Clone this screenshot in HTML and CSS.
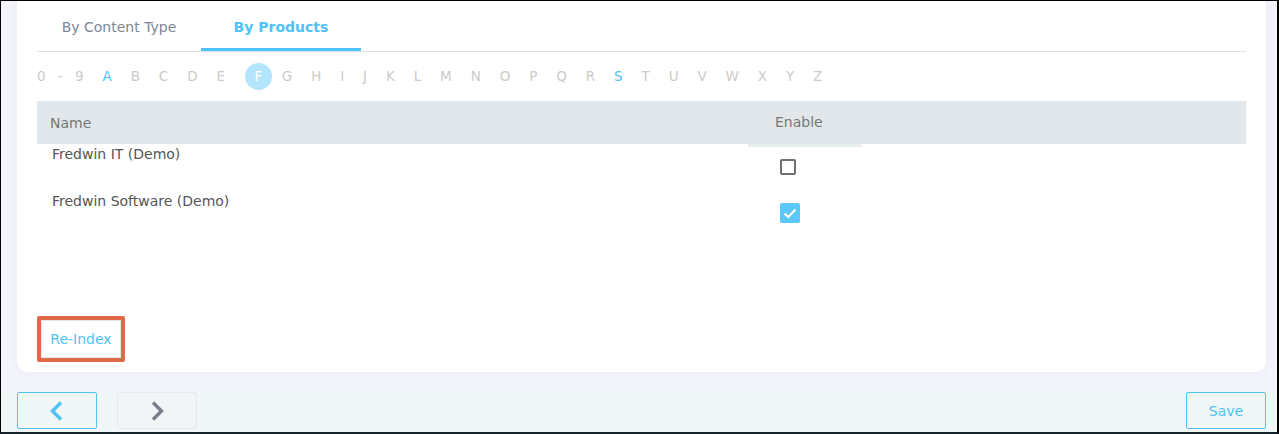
FILE: index.html
```html
<!DOCTYPE html>
<html>
<head>
<meta charset="utf-8">
<link rel="stylesheet" href="styles.css">
</head>
<body>
<div class="frame">
  <div class="card">
    <div class="tabs">
      <div class="tab">By Content Type</div>
      <div class="tab active">By Products</div>
    </div>
    <div class="alpha">
      <span class="ch num">0 - 9</span>
      <span class="ch on">A</span>
      <span class="ch">B</span>
      <span class="ch">C</span>
      <span class="ch">D</span>
      <span class="ch">E</span>
      <span class="ch sel">F</span>
      <span class="ch">G</span>
      <span class="ch">H</span>
      <span class="ch">I</span>
      <span class="ch">J</span>
      <span class="ch">K</span>
      <span class="ch">L</span>
      <span class="ch">M</span>
      <span class="ch">N</span>
      <span class="ch">O</span>
      <span class="ch">P</span>
      <span class="ch">Q</span>
      <span class="ch">R</span>
      <span class="ch on">S</span>
      <span class="ch">T</span>
      <span class="ch">U</span>
      <span class="ch">V</span>
      <span class="ch">W</span>
      <span class="ch">X</span>
      <span class="ch">Y</span>
      <span class="ch">Z</span>
    </div>
    <div class="table">
      <div class="thead">
        <div class="th name">Name</div>
        <div class="th enable">Enable</div>
      </div>
      <div class="row">
        <div class="td name">Fredwin IT (Demo)</div>
        <div class="td enable"><span class="cb"></span></div>
      </div>
      <div class="row">
        <div class="td name">Fredwin Software (Demo)</div>
        <div class="td enable"><span class="cb checked"><svg viewBox="0 0 20 20" width="20" height="20"><path d="M4.5 10.5 L8.2 14 L15.5 6.5" fill="none" stroke="#fff" stroke-width="2.2"/></svg></span></div>
      </div>
    </div>
    <div class="actions">
      <div class="reindex-wrap"><button class="reindex">Re-Index</button></div>
    </div>
  </div>
  <div class="footer">
    <button class="nav prev"><svg viewBox="0 0 20 20" width="20" height="20"><path d="M14 1.5 L5.5 10 L14 18.5" fill="none" stroke="#4fc3f7" stroke-width="3.4"/></svg></button>
    <button class="nav next"><svg viewBox="0 0 20 20" width="20" height="20"><path d="M6 1.5 L14.5 10 L6 18.5" fill="none" stroke="#7b7d8c" stroke-width="3.4"/></svg></button>
    <div class="spacer"></div>
    <button class="save">Save</button>
  </div>
</div>
</body>
</html>
```

FILE: styles.css
```css
* { box-sizing: border-box; }
html, body { margin: 0; padding: 0; }
body {
  font-family: "DejaVu Sans", "Noto Sans", sans-serif;
  background: #f3f4fc;
}
.frame {
  width: 1279px;
  height: 434px;
  border-top: 1px solid #000;
  border-left: 1px solid #000;
  border-right: 2px solid #000;
  border-bottom: 2px solid #16232a;
  background: #f3f4fc;
  display: flex;
  flex-direction: column;
  overflow: hidden;
}
.card {
  margin: 0 11px 0 16px;
  height: 371px;
  background: #fff;
  border-radius: 0 0 10px 10px;
  padding: 0 20px;
  box-shadow: 0 0 8px rgba(225, 225, 240, 0.6);
  display: flex;
  flex-direction: column;
}
.tabs {
  display: flex;
  height: 51px;
  border-bottom: 1px solid #e1e1e1;
}
.tab {
  height: 50px;
  display: flex;
  align-items: center;
  justify-content: center;
  font-size: 14px;
  color: #7d8694;
  padding-top: 1px;
}
.tab:first-child { width: 164px; }
.tab.active {
  width: 160px;
  color: #4fc3f7;
  font-weight: bold;
  border-bottom: 3px solid #4fc3f7;
  padding-top: 4px;
}
.alpha {
  height: 49px;
  display: flex;
  align-items: center;
  gap: 18.9px;
  font-size: 13.5px;
  color: #cbcbcb;
}
.ch { line-height: 27px; }
.ch.num { word-spacing: 8px; }
.ch.on { color: #4fc3f7; }
.ch.sel {
  width: 27px;
  height: 27px;
  border-radius: 50%;
  background: #b3e5fc;
  color: #fff;
  text-align: center;
  margin-left: 1px;
  margin-right: -9px;
}
.table { display: flex; flex-direction: column; }
.thead {
  display: flex;
  height: 43px;
  background: #e1e7ea;
  align-items: center;
  font-size: 14px;
  color: #777;
}
.name { width: 711px; padding-left: 13px; }
.th.enable {
  width: 114px;
  padding-left: 27px;
  height: 43px;
  line-height: 43px;
  box-shadow: 0 3px 0 #e8eef0;
}
.row { display: flex; height: 47px; font-size: 14px; color: #555; }
.td.name { padding-left: 15px; padding-top: 2px; }
.td.enable { padding-left: 32px; }
.cb {
  display: block;
  width: 16px;
  height: 16px;
  border: 2px solid #6f6f6f;
  border-radius: 2px;
  margin-top: 15px;
}
.cb.checked {
  width: 20px;
  height: 20px;
  border: none;
  background: #5ac8fa;
  margin-top: 12px;
}
.cb svg { display: block; }
.actions { margin-top: auto; padding-bottom: 10px; }
.reindex-wrap {
  display: inline-block;
  border: 4px solid #e0694a;
  border-radius: 2px;
}
.reindex {
  display: block;
  width: 80px;
  height: 38px;
  border: 1px solid #e6e6e6;
  background: #fff;
  color: #4fc3f7;
  font-family: inherit;
  font-size: 14px;
  padding: 0;
}
.footer {
  margin-top: 20px;
  flex: 1;
  background: #f1f7f7;
  display: flex;
  align-items: flex-start;
  padding: 0 11px 0 16px;
}
.nav, .save {
  width: 80px;
  height: 37px;
  border-radius: 2px;
  display: flex;
  align-items: center;
  justify-content: center;
  padding: 0;
}
.nav svg { display: block; }
.prev { border: 1px solid #4fc3f7; background: #f1f7f7; }
.next { border: 1px solid #e8e9ec; background: #f3f4f6; margin-left: 20px; }
.spacer { flex: 1; }
.save {
  border: 1px solid #4fc3f7;
  background: #f1f7f7;
  color: #4fc3f7;
  font-family: inherit;
  font-size: 14px;
}
```
